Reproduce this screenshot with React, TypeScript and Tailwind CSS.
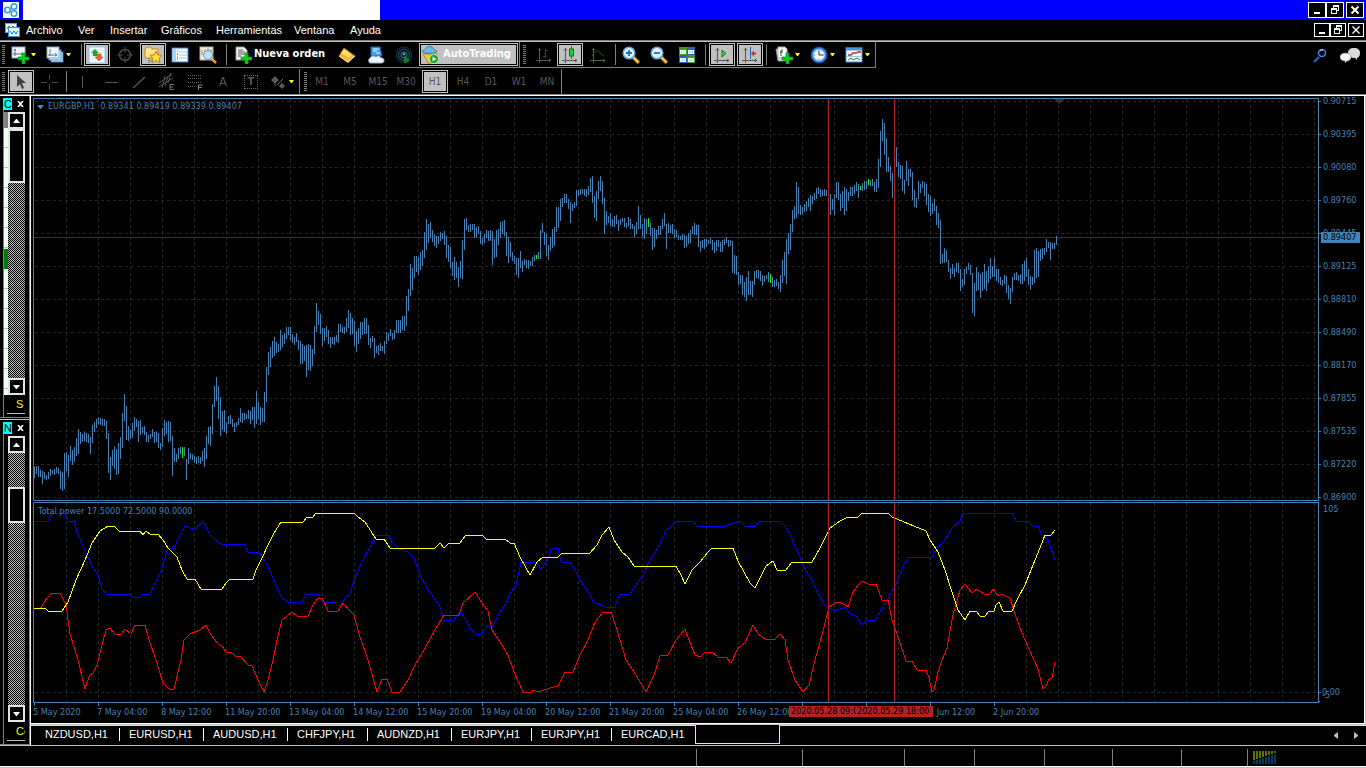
import React from "react";

// high-low of every bar, in chart coordinates, one bar each 2px
const barData = `
467-478 466-474 466-477 470-477 471-484 472-479 475-480 472-479 469-476 470-474 469-475 467-473 468-474 471-489 472-491 453-489
452-471 455-477 446-461 450-465 447-462 438-456 429-454 432-444 434-442 432-441 433-442 434-443 437-454 425-443 422-432 419-428
417-424 418-425 419-426 419-426 421-439 433-473 457-480 450-466 446-469 449-475 443-474 437-459 413-448 394-421 406-440 426-441
430-439 423-438 417-431 419-427 421-442 420-435 427-433 426-435 432-442 435-442 434-439 429-437 432-443 432-442 433-448 443-450
428-447 420-436 422-434 421-442 422-441 436-476 448-462 454-462 448-459 447-454 447-458 447-456 459-480 448-464 453-459 454-460
456-463 457-464 456-463 457-464 451-461 448-467 436-459 427-444 426-446 404-434 386-407 377-401 386-419 397-436 411-430 410-432
422-434 416-424 415-424 419-427 423-432 422-427 418-425 408-422 413-423 413-420 414-419 410-419 411-424 407-420 407-428 391-424
402-419 407-425 408-422 392-422 367-402 352-375 347-367 341-358 337-356 342-353 344-352 330-350 335-347 333-344 327-339 327-335
327-340 334-343 337-345 333-342 340-350 341-364 344-364 346-361 345-377 344-370 345-371 349-366 326-354 303-332 311-325 314-334
328-346 328-341 326-337 330-344 337-348 337-344 337-345 335-342 324-343 324-332 327-333 327-334 318-332 310-328 313-335 318-334
321-346 331-352 328-344 322-339 322-335 318-334 318-334 325-345 338-348 336-342 338-358 346-353 345-355 343-351 346-351 341-354
332-344 333-341 329-336 333-340 330-339 320-333 320-333 320-333 316-330 316-331 296-326 289-311
264-296 268-290 256-278 256-272 257-275 252-270 250-266 232-258 219-250 224-243 222-238 230-242 234-246 236-248 236-244
232-241 233-239 231-245 236-258 245-262 247-268 262-276 257-280 262-278 267-287 261-278 240-279 219-250 218-230 225-232 224-232
224-230 224-238 227-237 226-234 231-244 238-245 234-243 230-238 231-241 230-241 231-265 239-258 230-257 229-245 222-238 221-234
220-236 232-256 237-263 242-257 252-261 256-264 258-275 258-278 251-268 261-272 259-265 260-268 260-269 261-266 257-266 255-261
255-259 252-259 230-259 223-233 232-245 234-256 245-260 237-251 229-248 227-246 207-232 207-228 199-221 198-207 194-203 194-203
199-209 202-223 204-211 202-208 190-206 190-196 189-195 189-194 189-196 189-197 186-195 178-192 176-203 196-218 191-221 181-199
176-191 181-204 198-234 211-225 216-223 213-226 219-227 216-227 215-224 220-231 219-225 218-222 218-227 223-228 217-226 219-229
224-229 226-237 222-234 206-229 215-229 224-237 218-239 219-234 218-227 223-236 228-250 228-247 230-239 226-235 226-235 219-229
213-226 224-249 223-233 225-233 224-234 229-238 230-237 235-240 236-240 234-240 235-248 236-247 233-244 230-243 226-234 223-235
225-235 225-247 241-252 240-248 239-249 239-247 240-244 238-244 240-250 242-253 240-251 240-247 242-252 240-252 239-245 237-243
240-247 240-246 241-273 255-274 256-275 272-285 275-284 275-295 282-297 277-301 271-295 281-295 281-297 271-285 270-278 270-279
271-281 275-286 276-282 275-279 272-282 274-283 277-287 280-287 279-286 282-289 275-292 260-283 252-276 239-284 233-254 224-250
210-232 206-219 182-218 187-214 205-215 207-214 204-212 201-211 198-207 195-211 196-204 193-200 188-199 187-194 189-197 190-196
189-196 190-196 190-210 194-215 199-210 194-215 182-198 182-200 194-211 191-208 187-215 189-211 192-201 187-196 187-196 185-194
182-191 184-198 186-190 183-191 181-190 181-189 179-185 180-186 179-186 182-192 179-192 159-188 131-167 119-141 123-155 138-172
157-172 166-181 173-198 160-180 147-167 162-177 165-179 166-191 180-194 161-181 169-186 169-177 172-200 190-207 198-208 181-199
184-193 181-188 182-196 184-205 194-212 196-216 203-214 199-211 206-225 213-228 220-264 254-263 248-263 250-262 260-272 268-279
264-274 268-277 263-272 263-273 269-291 279-287 269-285 267-274 263-270 265-275 273-313 283-316 267-291 272-290 274-298 272-291
264-289 271-291 266-283 258-279 266-277 258-277 269-281 269-283 277-285 280-286 275-284 276-293 285-299 288-304 277-292 273-280
272-280 275-281 274-284 264-284 261-281 258-277 269-285 276-290 277-285 250-283 248-278 251-277 249-261 248-259 248-255 239-252
242-248 242-260 243-249 243-249 236-245`;

const bars = barData
  .trim()
  .split(/\s+/)
  .map((b, i) => {
    const [high, low] = b.split("-").map(Number);
    return { x: 34 + i * 2, high, low };
  });

const greenBars = [182, 536, 648, 770, 860, 868];

const redLine =
  "40,609 47,598 52,593 60,593 66,605 70,634 78,660 85,689 87,682 90,675 93,673 97,665 102,645 106,630 110,628 115,634 121,634 125,629 131,634 135,625 145,625 149,640 156,660 163,683 169,689 174,689 181,660 184,640 190,634 200,630 206,625 211,635 218,644 222,646 226,652 231,652 235,656 240,656 248,665 252,666 258,680 264,692 268,680 273,660 277,640 282,620 292,612 297,616 308,616 313,605 318,598 322,598 328,611 338,611 343,603 350,611 354,615 359,634 368,660 377,692 382,679 387,679 392,692 400,692 408,680 415,665 425,648 435,630 444,615 459,615 463,603 475,592 482,603 488,611 492,630 500,642 508,655 514,672 523,692 531,692 534,690 538,692 550,688 558,686 565,672 573,672 580,655 588,640 595,622 603,612 611,612 617,630 626,660 634,672 646,692 654,675 660,656 668,655 676,640 685,629 689,640 695,655 700,657 705,652 712,652 718,657 726,657 731,663 738,648 745,643 753,625 758,634 765,639 775,639 780,634 785,640 788,660 795,680 803,692 809,685 815,660 822,635 829,607 835,603 840,602 848,607 853,592 858,585 862,581 868,584 876,584 882,600 888,600 892,620 899,640 906,661 912,661 917,670 926,670 929,678 932,692 934,690 938,672 942,660 947,648 953,615 960,590 965,584 972,593 976,589 984,594 990,594 993,589 998,596 1002,594 1010,598 1014,611 1020,628 1025,640 1038,669 1043,689 1046,686 1049,679 1052,678 1055,662";
const yellowLine =
  "34,608 45,608 48,611 62,611 68,602 76,580 85,560 92,543 100,531 108,526 114,526 119,531 140,531 143,535 146,531 150,534 158,534 163,540 168,548 177,557 182,570 187,579 195,579 201,589 222,589 226,583 230,579 253,579 256,570 262,558 268,545 274,533 281,522 303,522 307,517 313,517 316,513 354,513 358,517 365,522 376,539 384,539 390,548 435,548 440,543 444,548 449,543 460,543 463,539 466,535 482,535 486,539 505,539 510,543 514,543 520,557 530,575 537,562 543,557 558,557 562,553 590,553 597,545 602,535 609,527 614,540 622,552 628,557 634,566 676,566 681,575 685,584 692,570 700,562 708,552 712,548 733,548 738,561 744,572 750,583 755,588 760,578 766,566 773,561 777,570 785,571 792,562 812,562 820,548 830,528 840,521 848,517 858,517 862,513 888,513 892,517 904,522 914,526 926,531 930,540 938,552 945,570 952,592 958,610 965,620 970,611 976,611 980,616 985,616 989,611 994,611 996,605 999,602 1003,611 1012,611 1017,600 1025,585 1033,565 1040,548 1045,535 1051,535 1055,530";
const blueLine =
  "34,521 48,521 52,513 64,513 68,521 74,521 78,535 84,548 92,566 98,575 102,589 106,594 128,594 133,597 139,598 143,594 150,594 154,585 161,571 168,548 174,548 180,535 185,526 195,530 203,521 210,535 215,540 221,544 244,544 248,552 258,552 263,558 268,566 275,583 282,598 288,602 302,602 306,594 318,594 322,602 335,602 340,607 345,598 350,594 354,580 362,562 371,545 375,535 388,535 392,542 398,548 408,552 414,558 420,575 427,588 434,598 440,607 444,620 454,620 460,612 465,618 470,628 475,634 482,634 488,625 492,628 500,612 506,603 510,594 516,585 521,562 537,562 541,570 546,562 552,548 558,548 561,562 570,562 575,570 580,580 588,592 594,602 605,607 615,607 620,594 630,594 636,585 643,575 649,562 655,552 660,544 666,530 672,526 676,521 693,521 697,526 725,526 737,522 740,521 745,526 755,526 760,521 780,521 785,526 790,535 796,548 800,557 805,570 812,580 818,594 826,607 836,611 845,607 850,614 856,616 862,625 868,620 875,620 880,612 890,595 898,580 903,566 908,557 932,557 937,548 945,540 952,528 960,521 963,513 1012,513 1016,521 1028,521 1033,526 1038,526 1042,535 1048,540 1055,560";

const prices = [
  "0.90715", "0.90395", "0.90080", "0.89760", "0.89445", "0.89125", "0.88810",
  "0.88490", "0.88170", "0.87855", "0.87535", "0.87220", "0.86900",
];

const dates = [
  "5 May 2020", "7 May 04:00", "8 May 12:00", "11 May 20:00", "13 May 04:00",
  "14 May 12:00", "15 May 20:00", "19 May 04:00", "20 May 12:00", "21 May 20:00",
  "25 May 04:00", "26 May 12:00", "", "", "1 Jun 12:00", "2 Jun 20:00",
];

const menus = [
  { label: "Archivo", width: "w-[52px]" },
  { label: "Ver", width: "w-8" },
  { label: "Insertar", width: "w-[51px]" },
  { label: "Gráficos", width: "w-[55px]" },
  { label: "Herramientas", width: "w-[78px]" },
  { label: "Ventana", width: "w-14" },
  { label: "Ayuda", width: "w-12" },
];

const tabs = [
  { label: "NZDUSD,H1", width: "w-[89px] pl-3.5" },
  { label: "EURUSD,H1", width: "w-[84px] pl-[9px]" },
  { label: "AUDUSD,H1", width: "w-[84px] pl-[9px]" },
  { label: "CHFJPY,H1", width: "w-20 pl-[9px]" },
  { label: "AUDNZD,H1", width: "w-[84px] pl-[9px]" },
  { label: "EURJPY,H1", width: "w-20 pl-[9px]" },
  { label: "EURJPY,H1", width: "w-20 pl-[9px]" },
  { label: "EURCAD,H1", width: "w-[83px] pl-[9px]" },
];

const statusCells = ["w-[106px]", "w-[102px]", "w-[70px]", "w-[70px]", "w-[68px]", "w-[69px]", "w-[66px]"];

const Svg: React.FC<{ children: React.ReactNode }> = ({ children }) => (
  <svg width="18" height="18" viewBox="0 0 18 18" fill="none" className="shrink-0">
    {children}
  </svg>
);

const Caret = () => (
  <svg width="6" height="3" viewBox="0 0 6 3" className="shrink-0">
    <path d="M0 0h5L3 3H2z" fill="#ffff00" />
  </svg>
);

const Plus = () => (
  <path d="M11 7h3v4h4v3h-4v4h-3v-4H7v-3h4z" fill="#0fd21f" stroke="#078a12" strokeWidth=".7" />
);

const NewChartIcon = () => (
  <Svg>
    <rect x="1" y="1" width="13" height="11" fill="#f2f8fc" stroke="#8ab4d6" />
    <path d="M4 3v7M2 8h10M3 4l1-1 1 1M10 7l2 1-2 1" stroke="#5a6f80" />
    <Plus />
  </Svg>
);

const ProfilesIcon = () => (
  <Svg>
    <rect x="5" y="6" width="12" height="10" fill="#d9eefb" stroke="#3f7fb8" />
    <rect x="3" y="4" width="12" height="10" fill="#d9eefb" stroke="#5b97c9" />
    <rect x="1" y="1" width="12" height="11" fill="#eef7fd" stroke="#79afd8" />
    <path d="M4 3v7M2 9h9M9 7l2 2-2 1" stroke="#56728c" />
  </Svg>
);

const MarketIcon = () => (
  <Svg>
    <rect x="1" y="1" width="16" height="16" rx="1" fill="#f6fbff" stroke="#8fbfe8" />
    <path d="M3 4h12M3 7h12M3 10h12M3 13h12" stroke="#c9dae8" />
    <path d="M7 3l4 4H9v3H5V7H3z" fill="#1fa82f" />
    <path d="M11 15l-4-4h2V8h4v3h2z" fill="#f0602a" stroke="#c63c10" strokeWidth=".5" />
  </Svg>
);

const TargetIcon = () => (
  <Svg>
    <circle cx="9" cy="9" r="5.5" stroke="#4a4a4a" strokeWidth="1.5" />
    <path d="M9 1v6M9 11v6M1 9h6M11 9h6" stroke="#4a4a4a" />
  </Svg>
);

const FolderStarIcon = () => (
  <Svg>
    <path d="M1 3l2-2h4l1 2h6v9H1z" fill="#ffe37a" stroke="#c58f1f" />
    <path d="M2 5h11" stroke="#fff4bd" />
    <path d="M5 12v6M5 15h3" stroke="#555" strokeDasharray="1 1" />
    <path d="M12 5l1.800 4 4.200.4-3 2.800 1 4.600-4-2.400-4 2.400 1-4.600-3-2.800 4.200-.4z" fill="#ffe23d" stroke="#b98612" />
  </Svg>
);

const TerminalIcon = () => (
  <Svg>
    <rect x="1" y="2" width="16" height="14" fill="#fff" stroke="#2f7fd0" />
    <rect x="2" y="3" width="3" height="12" fill="#a9d4f8" />
    <path d="M8 6h8M8 9h8M8 12h8" stroke="#9cc2e6" />
    <path d="M6 5h1M6 11h1" stroke="#c22" />
    <path d="M6 8h1M6 13h1" stroke="#222" />
  </Svg>
);

const TesterIcon = () => (
  <Svg>
    <rect x="1" y="1" width="13" height="13" fill="#f5f0df" stroke="#b9b093" />
    <path d="M3 9V4M6 8V3M9 6V2M12 8V3" stroke="#8a8a8a" />
    <circle cx="9" cy="9" r="4.500" fill="#b8defa" fillOpacity=".85" stroke="#5c93bf" />
    <path d="M12.500 12.500l4.500 4.500" stroke="#e0a52c" strokeWidth="2.500" />
  </Svg>
);

const OrderIcon = () => (
  <Svg>
    <path d="M2 1h8l3 3v10H2z" fill="#f4f4f4" stroke="#999" />
    <path d="M4 4h5M4 6h7M4 8h7M4 10h3" stroke="#555" />
    <Plus />
  </Svg>
);

const BookIcon = () => (
  <Svg>
    <path d="M6 2l11 8-7 7L1 10z" fill="#f3b62f" stroke="#a8690c" />
    <path d="M6 3l8 6-3 3-8-5z" fill="#ffdc7a" />
    <path d="M1 10l9 6 7-6" stroke="#ffe8a8" />
  </Svg>
);

const CloudIcon = () => (
  <Svg>
    <path d="M4 1h9l2 9H4z" fill="#3aa0f2" stroke="#1a63b5" />
    <path d="M6 3h6M6 5h4M9 7h4" stroke="#e6f6ff" />
    <path d="M3 17a3 3 0 010-5 4 4 0 016-1 3 3 0 015 1 2.500 2.500 0 011 5z" fill="#eef4fb" stroke="#93aecb" />
  </Svg>
);

const RadarIcon = () => (
  <Svg>
    <circle cx="9" cy="9" r="8" fill="#08141c" stroke="#12303f" />
    <circle cx="9" cy="9" r="5.500" stroke="#24506e" />
    <circle cx="9" cy="9" r="3" stroke="#3f7090" />
    <path d="M9 9v8a8 8 0 006-3z" fill="#127a2b" />
    <circle cx="9" cy="8" r="1.300" fill="#4b9fd1" />
  </Svg>
);

const AutoIcon = () => (
  <Svg>
    <path d="M2 8h14l-5 9H7z" fill="#f0c844" stroke="#b88a1c" />
    <path d="M1 5c2-1 3-1 4-3 1-2 6-2 7 0 1 2 2 2 4 3 0 3-15 3-15 0z" fill="#6fb9ea" stroke="#2f79b5" />
    <circle cx="13" cy="13" r="4.500" fill="#12a52b" stroke="#d9f5dd" strokeWidth=".7" />
    <path d="M11.500 10.500l4 2.500-4 2.500z" fill="#fff" />
  </Svg>
);

const Axes = ({ color }: { color: string }) => (
  <path d="M4.500 2v15M1 14.500h15M3 4.500l1.500-2 1.500 2M14 13l2 1.500-2 1.500" stroke={color} />
);

const BarChartIcon = () => (
  <Svg>
    <Axes color="#5a5a5a" />
    <path d="M10.500 3v9M8 10.500h3M10 4.500h3" stroke="#0a6a14" />
  </Svg>
);

const CandleIcon = () => (
  <Svg>
    <Axes color="#555" />
    <path d="M10.500 0v13" stroke="#067a10" />
    <rect x="8.500" y="3" width="4" height="7" fill="#1fd12f" stroke="#067a10" />
  </Svg>
);

const LineChartIcon = () => (
  <Svg>
    <Axes color="#5a5a5a" />
    <path d="M3 10c4-7 6-6 8-3l4 3" stroke="#0a6a14" />
  </Svg>
);

const Magnifier = ({ plus }: { plus?: boolean }) => (
  <Svg>
    <path d="M11 11l6 6" stroke="#8d6310" strokeWidth="4" />
    <path d="M11.500 11.500l5 5" stroke="#ffd34d" strokeWidth="2" />
    <circle cx="7" cy="7" r="5.800" fill="#dff3fd" stroke="#5ea8de" strokeWidth="1.500" />
    <path d={plus ? "M4 7h6M7 4v6" : "M4 7h6"} stroke="#2b6fa8" strokeWidth="1.800" />
  </Svg>
);

const TilesIcon = () => (
  <Svg>
    <path d="M1 1h8v8H1zM9 9h8v8H9z" fill="#4a9a18" />
    <path d="M9 1h8v8H9zM1 9h8v8H1z" fill="#2563c9" />
    <path d="M2 4h6v4H2zM10 4h6v4h-6zM2 12h6v4H2zM10 12h6v4h-6z" fill="#eef6ee" />
    <path d="M3 6h4M11 6h4M3 14h4M11 14h4" stroke="#9db" />
  </Svg>
);

const ScrollIcon = () => (
  <Svg>
    <Axes color="#555" />
    <path d="M9 4l4 3.500-4 3.500z" fill="#3fdc4a" stroke="#0a7a15" />
  </Svg>
);

const ShiftIcon = () => (
  <Svg>
    <Axes color="#555" />
    <path d="M9.500 1v12" stroke="#1d64b0" />
    <path d="M10 7.500l3-3v2h2v2h-2v2z" fill="#c93a10" />
  </Svg>
);

const IndicatorsIcon = () => (
  <Svg>
    <path d="M1 3h8l3 2v10H3z" fill="#ececec" stroke="#888" />
    <path d="M3 1h7l2 2v9H3z" fill="#fff" stroke="#aaa" />
    <path d="M8 4c-3-1-2 3-2 6M5 6h3" stroke="#333" />
    <Plus />
  </Svg>
);

const ClockIcon = () => (
  <Svg>
    <circle cx="9" cy="9" r="8" fill="#2d8ae8" stroke="#0d4fa6" />
    <circle cx="9" cy="9" r="5.500" fill="#f1f6fb" stroke="#a8c8ea" />
    <path d="M9 5v4h4" stroke="#333" />
    <path d="M9 4v1M9 13v1M4 9h1M13 9h1" stroke="#777" />
  </Svg>
);

const TemplateIcon = () => (
  <Svg>
    <rect x="1" y="2" width="16" height="14" fill="#f3faff" stroke="#4f94d8" />
    <path d="M1 3h16" stroke="#4f94d8" strokeWidth="3" />
    <path d="M3 9h3l2-2h3l2-1h3" stroke="#b8320f" strokeWidth="1.300" />
    <path d="M1 10.500h16" stroke="#9fc6ea" />
    <path d="M3 14l3-2 2 2 4-2 3 2" stroke="#128a1f" />
  </Svg>
);

const Grip = ({ className }: { className: string }) => (
  <div className={`flex items-center ${className}`}>
    <div className="h-5 w-[3px] bg-[repeating-linear-gradient(#808080_0_1px,#000_1px_2px)]" />
  </div>
);

const Sep = ({ className }: { className: string }) => (
  <div className={`flex items-center justify-center ${className}`}>
    <div className="h-[21px] w-px bg-[#808080]" />
  </div>
);

type ToolProps = {
  label: string;
  className: string;
  pressed?: boolean;
  drop?: boolean;
  children: React.ReactNode;
};

const Tool: React.FC<ToolProps> = ({ label, className, pressed, drop, children }) => (
  <button
    aria-label={label}
    className={`flex shrink-0 items-center justify-center gap-0.5 ${className} ${
      pressed ? "h-[23px] border border-[#c0c0c0] p-px" : "h-[23px]"
    }`}
  >
    {pressed ? (
      <span className="flex h-full w-full items-center justify-center bg-[#c0c0c0]">{children}</span>
    ) : (
      children
    )}
    {drop && <Caret />}
  </button>
);

const WinButtons = ({ small }: { small?: boolean }) => {
  const box = small
    ? "flex h-3.5 w-4 items-center justify-center border border-white bg-black"
    : "flex h-4 w-[18px] items-center justify-center border border-white bg-black";
  return (
    <div className="ml-auto flex items-center pr-0.5">
      <button aria-label="Minimizar" className={box}>
        <svg width="10" height="10" viewBox="0 0 10 10"><path d="M2 8h6" stroke="#fff" strokeWidth="2" /></svg>
      </button>
      <button aria-label="Restaurar" className={box}>
        <svg width="10" height="10" viewBox="0 0 10 10" fill="none" shapeRendering="crispEdges">
          <path d="M3.500 3V1.500h5v4H7M1.500 4.500h5v4h-5z" stroke="#fff" />
          <path d="M3 1h6M1 4h6" stroke="#fff" strokeWidth="2" />
        </svg>
      </button>
      <button aria-label="Cerrar" className={`ml-0.5 ${box}`}>
        <svg width="10" height="10" viewBox="0 0 10 10">
          <path d="M1.500 1.500l7 7M8.500 1.500l-7 7" stroke="#fff" strokeWidth={small ? 1.4 : 2} />
        </svg>
      </button>
    </div>
  );
};

const ArrowBox = ({ up }: { up?: boolean }) => (
  <button
    aria-label={up ? "Subir" : "Bajar"}
    className="flex h-[17px] w-[17px] shrink-0 items-center justify-center border-2 border-[#e4e4e4] bg-black"
  >
    <svg width="7" height="4" viewBox="0 0 7 4">
      <path d={up ? "M0 4h7L4 0H3z" : "M0 0h7L4 4H3z"} fill="#fff" />
    </svg>
  </button>
);

type DockProps = { letter: string; foot: string; className: string; lead: string; thumb: string; list?: boolean };

const DockPanel: React.FC<DockProps> = ({ letter, foot, className, lead, thumb, list }) => (
  <div className={`flex flex-col overflow-hidden pl-[3px] ${className}`}>
    <div className="flex h-3.5 shrink-0 items-center pt-px">
      <span className="h-3 w-[9px] overflow-hidden bg-[#00ffff] pl-px text-[11px] leading-3 text-black">
        {letter}
      </span>
      <button aria-label="Cerrar panel" className="ml-1 flex w-2 justify-center">
        <svg width="7" height="6" viewBox="0 0 7 6">
          <path d="M1 0l5 6M6 0L1 6" stroke="#fff" strokeWidth="1.600" />
        </svg>
      </button>
    </div>
    <div className="flex min-h-0 flex-1 border-l border-[#808080] pt-0.5">
      <div className={list ? "flex w-1 flex-col bg-[#f0fff0]" : "w-1"}>
        {list && (
          <>
            <div className="h-4 bg-[#808080]" />
            <div className="flex-1 bg-[repeating-linear-gradient(#f0fff0_0_19px,#c0c0c0_19px_20px)]" />
            <div className="h-5 bg-[#008000]" />
            <div className="h-[126px] bg-[repeating-linear-gradient(#f0fff0_0_19px,#c0c0c0_19px_20px)]" />
          </>
        )}
      </div>
      <div className="flex w-[17px] flex-col bg-[repeating-conic-gradient(#b8b8b8_0_25%,#000_0_50%)] bg-size-[2px_2px]">
        <ArrowBox up />
        <div className={`shrink-0 ${lead}`} />
        <div className={`shrink-0 border-2 border-[#e4e4e4] bg-black ${thumb}`} />
        <div className="flex-1" />
        <ArrowBox />
      </div>
    </div>
    <div className="h-[22px] shrink-0 border-l border-[#808080] pl-[3px]">
      <div className="h-[19px] w-[18px] overflow-hidden border-b border-[#c0c0c0] pl-[9px] text-[11px] leading-[18px] text-[#ffff00]">
        {foot}
      </div>
    </div>
  </div>
);

const Chart = () => {
  const gridX = Array.from({ length: 40 }, (_, i) => 66 + i * 32);
  return (
    <svg
      viewBox="33 98 1288 609"
      preserveAspectRatio="none"
      className="block h-full w-full"
      shapeRendering="crispEdges"
      fill="none"
    >
      <g stroke="#262626" strokeDasharray="3 3">
        {gridX.map((x) => (
          <path key={x} d={`M${x}.500 99V500M${x}.500 503V702`} />
        ))}
        {prices.map((p, i) => (
          <path key={p} d={`M35 ${101.5 + i * 33}H1318`} />
        ))}
        <path d="M35 692.500H1318" />
      </g>
      <path d="M34 237.500H1320" stroke="#333" />
      <path d="M1055 99h9l-5 5z" fill="#333" />
      {bars.map((b) => (
        <rect
          key={b.x}
          x={b.x}
          y={b.high}
          width="1"
          height={b.low - b.high}
          fill={greenBars.includes(b.x) ? "#00ff00" : "#4682b4"}
        />
      ))}
      <polyline points={blueLine} stroke="#0000ff" />
      <polyline points={redLine} stroke="#ff0000" />
      <polyline points={yellowLine} stroke="#ffff00" />
      <path d="M828.500 99V500M828.500 503V702M894.500 99V500M894.500 503V702" stroke="#b22222" />
      <g stroke="#4682b4">
        <path d="M33 98.500H1318.500V500.500H33.500V98" />
        <path d="M33 502.500H1318.500V702.500H33.500V502" />
        {prices.map((p, i) => (
          <path key={p} d={`M1319 ${101.5 + i * 33}h2`} />
        ))}
        <path d="M1319 692.500h2M1319 701.500h1" />
        {dates.map((_, i) => (
          <path key={i} d={`M${34.5 + i * 64} 703v3`} />
        ))}
      </g>
    </svg>
  );
};

const App: React.FC = () => {
  return (
    <div className="flex h-screen flex-col overflow-hidden bg-black font-['Liberation_Sans',sans-serif] text-[11px] text-white">
      <header className="flex h-5 shrink-0 items-center bg-[#0000ff]">
        <div className="flex h-5 w-[23px] items-center pl-[3px]">
          <svg width="16" height="16" viewBox="0 0 16 16" fill="none">
            <rect width="16" height="16" fill="#fff" />
            <circle cx="4.500" cy="8" r="2.800" stroke="#2f9fd0" strokeWidth="1.600" />
            <circle cx="11" cy="4.500" r="2.800" stroke="#2f9fd0" strokeWidth="1.600" />
            <circle cx="11" cy="11.500" r="2.800" stroke="#2f9fd0" strokeWidth="1.600" />
          </svg>
        </div>
        <div className="h-5 w-[357px] bg-white" />
        <WinButtons />
      </header>

      <nav className="flex h-5 shrink-0 items-center pl-[5px]">
        <svg width="15" height="14" viewBox="0 0 15 14" fill="none">
          <rect x=".5" y=".5" width="11" height="9" fill="#e7f5ff" stroke="#58a4e6" />
          <path d="M2 6l2-3 2 3 2-3 2 2" stroke="#2f78c4" />
          <rect x="3.500" y="4.500" width="11" height="9" fill="#e7f5ff" stroke="#3d8fdc" />
          <path d="M5 8l2 3 2-3 2 3 2-3" stroke="#2566b8" />
        </svg>
        <div className="flex pl-1.5">
          {menus.map((m) => (
            <button key={m.label} className={`text-left whitespace-nowrap ${m.width}`}>
              {m.label}
            </button>
          ))}
        </div>
        <WinButtons small />
      </nav>

      <div className="flex h-7 shrink-0 border-t border-[#808080]">
        <div className="flex items-center border-t border-r border-b border-[#808080] border-t-[#c0c0c0]">
          <Grip className="w-2 pl-0.5" />
          <Tool label="Nuevo gráfico" className="w-8" drop><NewChartIcon /></Tool>
          <Tool label="Perfiles" className="w-[38px]" drop><ProfilesIcon /></Tool>
          <Sep className="w-1.5" />
          <Tool label="Observación del mercado" className="w-[26px]" pressed><MarketIcon /></Tool>
          <Tool label="Ventana de datos" className="w-[30px]"><TargetIcon /></Tool>
          <Tool label="Navegador" className="w-[26px]" pressed><FolderStarIcon /></Tool>
          <Tool label="Terminal" className="w-7"><TerminalIcon /></Tool>
          <Tool label="Probador" className="w-7"><TesterIcon /></Tool>
          <Sep className="w-2" />
          <button className="flex w-[102px] shrink-0 items-center gap-0.5 pl-1 font-['DejaVu_Sans_Condensed','DejaVu_Sans',sans-serif] text-[11px] font-bold whitespace-nowrap">
            <OrderIcon />
            Nueva orden
          </button>
          <Tool label="Editor" className="w-[30px]"><BookIcon /></Tool>
          <Tool label="Servidor virtual" className="w-[27px]"><CloudIcon /></Tool>
          <Tool label="Señales" className="w-[30px]"><RadarIcon /></Tool>
          <button className="flex h-[23px] w-[99px] shrink-0 border border-[#c0c0c0] p-px font-['DejaVu_Sans_Condensed','DejaVu_Sans',sans-serif] text-[11px] font-bold whitespace-nowrap">
            <span className="flex h-full w-full items-center gap-1 bg-[#c0c0c0]">
              <AutoIcon />
              AutoTrading
            </span>
          </button>
          <div className="mx-px h-[25px] w-px bg-[#808080]" />
          <Grip className="w-2.5 pl-0.5" />
          <Tool label="Barras" className="w-[26px]"><BarChartIcon /></Tool>
          <Tool label="Velas" className="w-[26px]" pressed><CandleIcon /></Tool>
          <Tool label="Línea" className="w-[30px]"><LineChartIcon /></Tool>
          <Sep className="w-1" />
          <Tool label="Acercar" className="w-7"><Magnifier plus /></Tool>
          <Tool label="Alejar" className="w-7"><Magnifier /></Tool>
          <Tool label="Mosaico" className="w-7"><TilesIcon /></Tool>
          <Sep className="w-2" />
          <Tool label="Desplazamiento automático" className="mr-0.5 w-[26px]" pressed><ScrollIcon /></Tool>
          <Tool label="Desplazar gráfico" className="w-[26px]" pressed><ShiftIcon /></Tool>
          <Sep className="w-[7px]" />
          <Tool label="Indicadores" className="w-9" drop><IndicatorsIcon /></Tool>
          <Tool label="Períodos" className="w-[34px]" drop><ClockIcon /></Tool>
          <Tool label="Plantillas" className="w-[35px]" drop><TemplateIcon /></Tool>
        </div>
        <div className="flex flex-1 items-center justify-end gap-3 border-t border-[#c0c0c0] pr-[5px]">
          <button aria-label="Buscar">
            <svg width="15" height="15" viewBox="0 0 15 15" fill="none">
              <path d="M6 9l-5 5" stroke="#2456c0" strokeWidth="2.500" />
              <circle cx="9" cy="5" r="3.500" stroke="#4a7fe0" strokeWidth="1.600" />
              <path d="M7 3a3 3 0 013-1" stroke="#d5e2fa" />
            </svg>
          </button>
          <button aria-label="Comunidad">
            <svg width="21" height="16" viewBox="0 0 21 16">
              <path d="M14 1c4 0 6 2 6 5s-1 4-3 5v2l-2-2c-4 0-7-2-7-5s2-5 6-5z" fill="#d9d9d9" />
              <path d="M6 6c3 0 5 1.500 5 4s-2 4-4 4l-2 2v-2c-3 0-5-1.500-5-4s2-4 6-4z" fill="#f4f4f4" stroke="#777" strokeWidth=".5" />
            </svg>
          </button>
        </div>
      </div>

      <div className="flex h-7 shrink-0 border-b border-white">
        <div className="flex flex-1 border-b border-[#808080] pt-px text-[#585858]">
          <div className="flex items-center border-r border-[#808080] font-['DejaVu_Sans_Condensed','DejaVu_Sans',sans-serif] text-[10px]">
            <Grip className="w-2 pl-0.5" />
            <Tool label="Cursor" className="w-[26px]" pressed>
              <Svg><path d="M5 2v12l3-3 2 5 2-1-2-5h4z" fill="#404040" /></Svg>
            </Tool>
            <Tool label="Cruz" className="w-[30px]">
              <Svg><path d="M9.500 1v6M9.500 11v6M1 9.500h6M12 9.500h6" stroke="#484848" /></Svg>
            </Tool>
            <Sep className="w-1" />
            <Tool label="Línea vertical" className="w-[29px]">
              <Svg><path d="M8.500 3v12" stroke="#585858" /></Svg>
            </Tool>
            <Tool label="Línea horizontal" className="w-7">
              <Svg><path d="M3 9.500h13" stroke="#585858" /></Svg>
            </Tool>
            <Tool label="Línea de tendencia" className="w-7">
              <Svg><path d="M3 15L15 4" stroke="#585858" strokeWidth="1.300" /></Svg>
            </Tool>
            <Tool label="Canal equidistante" className="w-7">
              <Svg>
                <path d="M1 10L14 1M1 14L15 5M4 15l3-12M7 13l3-10M10 10l3-10" stroke="#585858" />
                <path d="M16 11.500h-4v5h4M12 14h3" stroke="#707070" />
              </Svg>
            </Tool>
            <Tool label="Fibonacci" className="w-7">
              <Svg>
                <path d="M2 2.500h13M2 5.500h13M2 9.500h13M2 13.500h8" stroke="#686868" strokeDasharray="1 1" />
                <path d="M12.500 17v-5h4M13 14.500h3" stroke="#808080" />
              </Svg>
            </Tool>
            <button className="w-7 text-[13px] leading-4">A</button>
            <button className="flex w-7 justify-center">
              <span className="h-3.5 w-3.5 border border-dotted border-[#686868] text-center text-[11px] leading-3 font-bold">T</span>
            </button>
            <Tool label="Flechas" className="w-[34px]" drop>
              <Svg>
                <path d="M6 3l4 4-4 4-4-4zM13 10l3 3-3 3-3-3z" fill="#585858" />
                <path d="M8 12l6-6M5 11l2 2" stroke="#686868" />
              </Svg>
            </Tool>
            <div className="h-[25px] w-px bg-[#808080]" />
            <Grip className="w-2 pl-1" />
            {["M1", "M5", "M15", "M30"].map((t) => (
              <button key={t} className="w-7">{t}</button>
            ))}
            <Tool label="H1" className="mr-px ml-0.5 w-[26px]" pressed>H1</Tool>
            {["H4", "D1", "W1", "MN"].map((t) => (
              <button key={t} className="w-7">{t}</button>
            ))}
          </div>
        </div>
      </div>

      <div className="flex min-h-0 flex-1">
        <aside className="flex w-[29px] shrink-0 flex-col">
          <DockPanel letter="C" foot="S" className="h-[322px] border-b border-[#808080]" lead="h-0" thumb="h-[54px]" list />
          <div className="h-0.5 border-b border-[#c0c0c0]" />
          <DockPanel letter="N" foot="Co" className="min-h-0 flex-1 border-b border-[#808080]" lead="h-[34px]" thumb="h-9" />
        </aside>

        <main className="flex min-w-0 flex-1 flex-col border-l border-[#808080]">
          <section className="flex min-h-0 flex-1 flex-col border-r border-b border-[#c0c0c0]">
            <div className="flex min-h-0 flex-1 border-r border-b border-l border-white pl-0.5 font-['DejaVu_Sans_Condensed','DejaVu_Sans',sans-serif] text-[9px] leading-[11px] text-[#4682b4]">
              <div className="relative flex min-w-0 flex-1 flex-col pt-0.5">
                <div className="min-h-0 flex-1">
                  <Chart />
                </div>
                <div className="flex h-4 shrink-0">
                  {dates.map((d, i) => (
                    <span key={i} className="w-16 shrink-0 whitespace-nowrap">{d}</span>
                  ))}
                </div>
                <div className="absolute top-[5px] left-1 flex items-center gap-1 whitespace-pre">
                  <svg width="7" height="4" viewBox="0 0 7 4"><path d="M0 0h7L4 4H3z" fill="#4682b4" /></svg>
                  EURGBP,H1  0.89341 0.89419 0.89339 0.89407
                </div>
                <div className="absolute top-[410px] left-[5px]">Total power 17.5000 72.5000 90.0000</div>
                <div className="absolute bottom-[6px] left-[756px] flex h-[11px] bg-[#b22222] whitespace-nowrap text-black">
                  <span className="w-[67px] overflow-hidden pl-0.5">2020.05.28 09:00</span>
                  <span className="w-[77px] pl-px">2020.05.29 18:00</span>
                </div>
              </div>
              <div className="relative flex w-[43px] shrink-0 flex-col pl-0.5">
                {prices.map((p) => (
                  <span key={p} className="h-[33px] shrink-0 last-of-type:h-3">{p}</span>
                ))}
                <div className="absolute top-[136px] left-0 h-[11px] w-[39px] bg-[#4682b4] pl-0.5 text-black">0.89407</div>
                <div className="absolute top-[408px] left-0.5">105</div>
                <div className="absolute bottom-[25px] left-px">0.00</div>
                <div className="absolute bottom-[22px] left-px">-5</div>
              </div>
            </div>
          </section>

          <div className="flex h-5 shrink-0 border-l border-white">
            {tabs.map((t, i) => (
              <button
                key={i}
                className={`flex h-[18px] shrink-0 items-center border-t border-[#ffff00] text-left whitespace-nowrap ${t.width}`}
              >
                {t.label}
                {i < tabs.length - 1 && <span className="ml-auto h-[13px] w-px bg-white" />}
              </button>
            ))}
            <button aria-label="Gráfico activo" className="h-[19px] w-[85px] shrink-0 border-r border-b border-l border-[#ffff00]" />
            <div className="flex flex-1 items-center justify-end gap-4 border-t border-[#ffff00] pr-2">
              <button aria-label="Anterior">
                <svg width="4" height="7" viewBox="0 0 4 7"><path d="M4 0v7L0 4V3z" fill="#c0c0c0" /></svg>
              </button>
              <button aria-label="Siguiente">
                <svg width="4" height="7" viewBox="0 0 4 7"><path d="M0 0v7l4-3V3z" fill="#c0c0c0" /></svg>
              </button>
            </div>
          </div>
        </main>
      </div>

      <footer className="flex h-[23px] shrink-0 border-t border-b border-[#c0c0c0]">
        <div className="flex flex-1 border-b border-white pt-[3px]">
          <div className="flex-1" />
          {statusCells.map((w, i) => (
            <div key={i} className={`border-l border-[#808080] ${w}`} />
          ))}
          <div className="w-[119px] border-l border-[#808080] pt-0.5 pl-[5px]">
            <svg width="24" height="13" viewBox="0 0 24 13" shapeRendering="crispEdges">
              {[9, 8, 7, 6, 5, 4, 3, 2].map((h, i) => (
                <g key={i}>
                  <rect x={i * 3} y="0" width="2" height={h} fill="#5f7300" />
                  <rect x={i * 3} y={h + 1} width="2" height={12 - h} fill="#003c5a" />
                </g>
              ))}
            </svg>
          </div>
        </div>
      </footer>
    </div>
  );
};

export default App;
